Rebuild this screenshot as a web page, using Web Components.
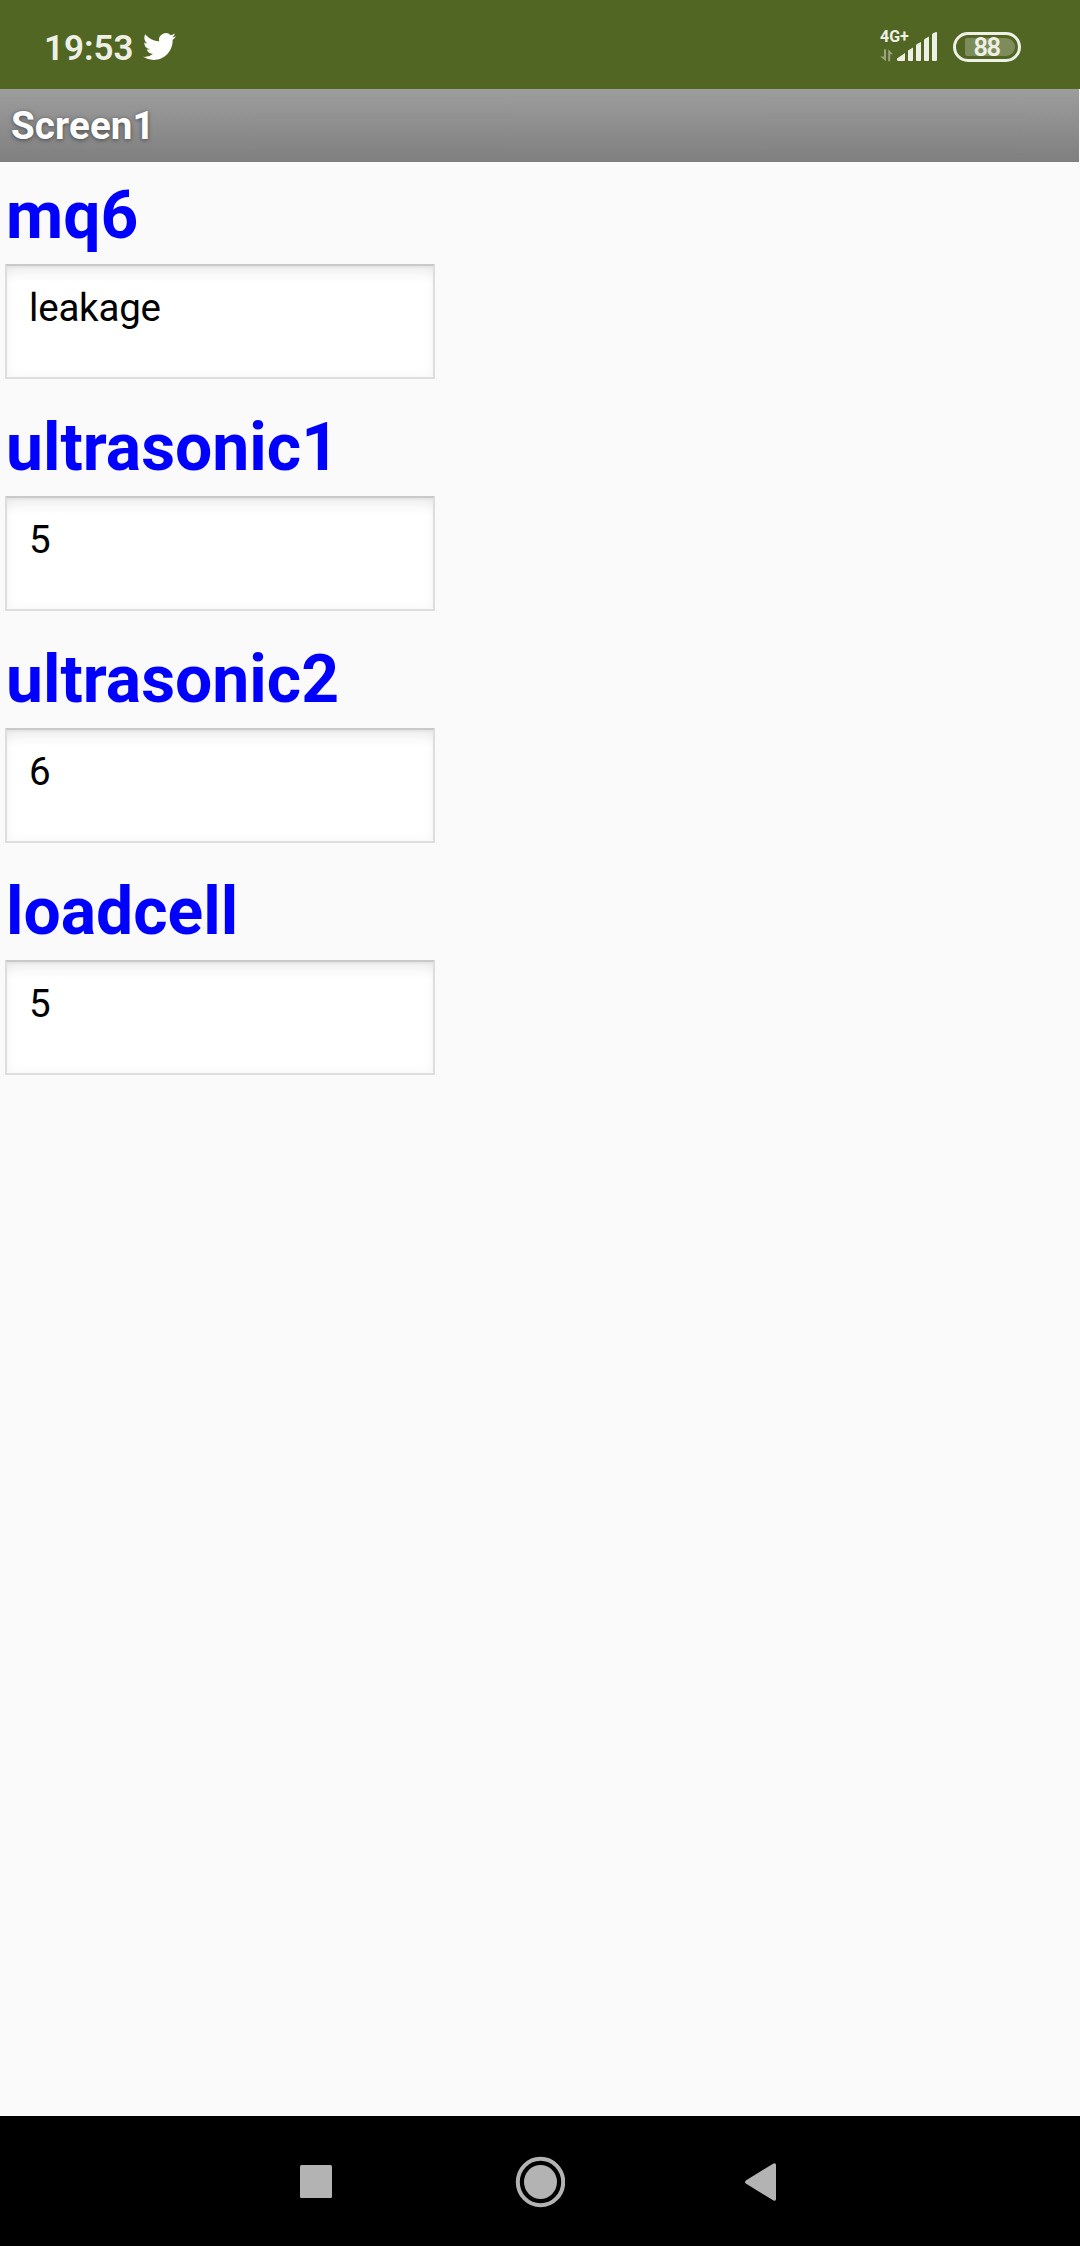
<!DOCTYPE html>
<html lang="en">
<head>
<meta charset="utf-8">
<title>Screen1</title>
<style>
  body { margin: 0; background: #fafafa; font-family: Roboto, sans-serif; }
</style>
</head>
<body>
<phone-screen>
  <status-bar slot="status" time="19:53" network="4G+" battery="88"></status-bar>
  <title-bar slot="title">Screen1</title-bar>
  <sensor-field label="mq6">leakage</sensor-field>
  <sensor-field label="ultrasonic1">5</sensor-field>
  <sensor-field label="ultrasonic2">6</sensor-field>
  <sensor-field label="loadcell">5</sensor-field>
  <nav-bar slot="nav"></nav-bar>
</phone-screen>
<script>
class ShadowElement extends HTMLElement {
  constructor() {
    super();
    this.attachShadow({ mode: 'open' });
  }
  connectedCallback() {
    this.shadowRoot.innerHTML = this.render();
  }
}

customElements.define('phone-screen', class extends ShadowElement {
  render() {
    return `<style>
      :host { display: flex; flex-direction: column; width: 1080px; height: 2246px; background: #fafafa; overflow: hidden; }
      main { flex: 1; min-height: 0; display: flex; flex-direction: column; padding: 15px 5px 0; }
    </style>
    <slot name="status"></slot><slot name="title"></slot>
    <main><slot></slot></main>
    <slot name="nav"></slot>`;
  }
});

customElements.define('status-bar', class extends ShadowElement {
  render() {
    return `<style>
      :host { display: flex; justify-content: space-between; box-sizing: border-box; height: 89px; padding: 0 59px 0 44px; background: #526623; color: #eef0e6; }
      .left, .right { display: flex; align-items: flex-start; }
      .time { font-size: 35px; font-weight: 600; line-height: 42px; margin-top: 28px; width: 99px; white-space: nowrap; }
      .bird { margin-top: 30px; }
      .signal { display: grid; margin: 29px 15px 0 0; width: 58px; }
      .signal > * { grid-area: 1 / 1; }
      .net { font-size: 16px; font-weight: 700; line-height: 16px; }
      .battery { box-sizing: border-box; width: 68px; height: 30px; margin-top: 32px; border: 3px solid #eef0e6; border-radius: 15px; padding: 3px 3px 3px 9px; display: flex; }
      .level { flex: 1; background: #7d8c5a; border-radius: 2px 9px 9px 2px; font-size: 25.5px; font-weight: 600; line-height: 19px; padding-left: 8.5px; letter-spacing: -1.5px; }
    </style>
    <div class="left">
      <span class="time">${this.getAttribute('time')}</span>
      <svg class="bird" width="33" height="33" viewBox="0 0 24 24"><path fill="#fff" d="M23.953 4.57a10 10 0 01-2.825.775 4.958 4.958 0 002.163-2.723c-.951.555-2.005.959-3.127 1.184a4.92 4.92 0 00-8.384 4.482C7.69 8.095 4.067 6.13 1.64 3.162a4.822 4.822 0 00-.666 2.475c0 1.71.87 3.213 2.188 4.096a4.904 4.904 0 01-2.228-.616v.06a4.923 4.923 0 003.946 4.827 4.996 4.996 0 01-2.212.085 4.936 4.936 0 004.604 3.417 9.867 9.867 0 01-6.102 2.105c-.39 0-.779-.023-1.17-.067a13.995 13.995 0 007.557 2.209c9.053 0 13.998-7.496 13.998-13.985 0-.21 0-.42-.015-.63A9.935 9.935 0 0024 4.59z"/></svg>
    </div>
    <div class="right">
      <div class="signal">
        <span class="net">${this.getAttribute('network')}</span>
        <svg width="58" height="33" viewBox="0 0 58 33">
          <path fill="#98a47d" d="M4 20.300H6V32.300L.2 27.500H4zM8.200 32.300V20.300L13 25.300H10.200V32.300z"/>
          <path fill="#eef0e6" d="M17 29.5 25 24v7q0 1-1 1h-6q-1 0-1-1zM28 21.5 33 18.5V31q0 1-1 1h-3q-1 0-1-1zM36 16.5q0-1 1-1.6L41 13V31q0 1-1 1h-3q-1 0-1-1zM44 11.5q0-1 1-1.8L49 7.500V31q0 1-1 1h-3q-1 0-1-1zM52 6q0-1 1-1.800L56 3q1-.3 1 1V31q0 1-1 1h-3q-1 0-1-1z"/>
        </svg>
      </div>
      <div class="battery"><div class="level">${this.getAttribute('battery')}</div></div>
    </div>`;
  }
});

customElements.define('title-bar', class extends ShadowElement {
  render() {
    return `<style>
      :host { display: block; box-sizing: border-box; height: 73px; margin-right: 1px; padding: 14px 0 0 11px; background: linear-gradient(#9d9d9d, #7f7f7f); color: #fff; font-size: 38.5px; font-weight: 700; line-height: 45px; letter-spacing: .15px; text-shadow: 0 1px 4px rgba(0,0,0,.5); }
    </style><slot></slot>`;
  }
});

customElements.define('sensor-field', class extends ShadowElement {
  render() {
    return `<style>
      :host { display: flex; flex-direction: column; align-items: flex-start; height: 232px; }
      .label { color: #00f; font-size: 66px; font-weight: 700; line-height: 78px; height: 87px; padding-left: 1px; white-space: nowrap; }
      .box { box-sizing: border-box; width: 430px; height: 115px; padding: 19px 21px 0 22px; background: #fff; border: 2px solid #dedede; border-top-color: #c9c9c9; color: #000; font-size: 38.5px; line-height: 45px; letter-spacing: -.2px;
        box-shadow: inset 0 14px 12px -6px rgba(0,0,0,.055), inset 0 2px 2px rgba(0,0,0,.04), inset 0 0 14px rgba(0,0,0,.035); }
    </style>
    <div class="label">${this.getAttribute('label')}</div>
    <div class="box"><slot></slot></div>`;
  }
});

customElements.define('nav-bar', class extends ShadowElement {
  render() {
    return `<style>
      :host { display: flex; align-items: center; justify-content: space-between; box-sizing: border-box; height: 130px; padding: 2px 304px 0 300px; background: #000; }
      svg { display: block; fill: #b3b3b3; }
    </style>
    <svg width="32" height="34" viewBox="0 0 32 34"><rect width="32" height="33" rx="1.5"/></svg>
    <svg width="52" height="52" viewBox="0 0 52 52"><ellipse cx="27.500" cy="26" rx="22.700" ry="23.300" fill="none" stroke="#b3b3b3" stroke-width="4"/><ellipse cx="27.500" cy="26" rx="16.500" ry="17"/></svg>
    <svg width="31" height="40" viewBox="0 0 31 40"><path d="M.8 18.500 28.500 1.500Q31 .5 31 3V37Q31 39.500 28.500 38.500L.8 21.500Q-.7 20 .8 18.500z"/></svg>`;
  }
});
</script>
</body>
</html>
